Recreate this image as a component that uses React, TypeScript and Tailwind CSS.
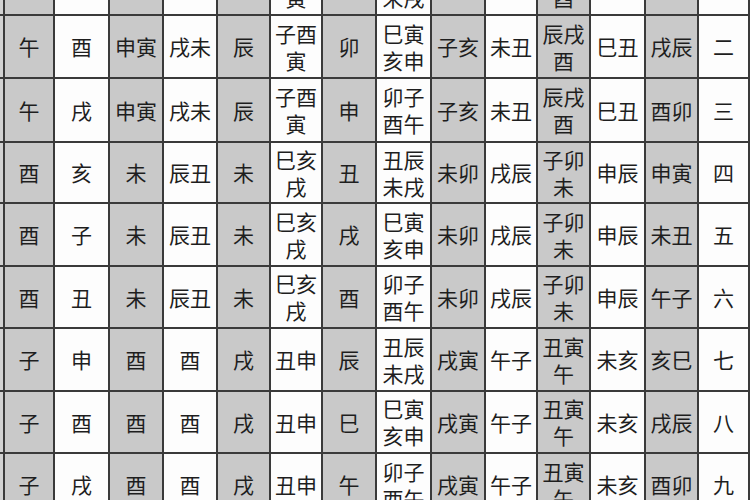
import React from "react";

const rows: string[][] = [
  ["", "", "", "", "", "子酉/寅", "", "丑辰/未戌", "", "", "辰戌/酉", "", "", ""],
  ["午", "酉", "申寅", "戌未", "辰", "子酉/寅", "卯", "巳寅/亥申", "子亥", "未丑", "辰戌/酉", "巳丑", "戌辰", "二"],
  ["午", "戌", "申寅", "戌未", "辰", "子酉/寅", "申", "卯子/酉午", "子亥", "未丑", "辰戌/酉", "巳丑", "酉卯", "三"],
  ["酉", "亥", "未", "辰丑", "未", "巳亥/戌", "丑", "丑辰/未戌", "未卯", "戌辰", "子卯/未", "申辰", "申寅", "四"],
  ["酉", "子", "未", "辰丑", "未", "巳亥/戌", "戌", "巳寅/亥申", "未卯", "戌辰", "子卯/未", "申辰", "未丑", "五"],
  ["酉", "丑", "未", "辰丑", "未", "巳亥/戌", "酉", "卯子/酉午", "未卯", "戌辰", "子卯/未", "申辰", "午子", "六"],
  ["子", "申", "酉", "酉", "戌", "丑申", "辰", "丑辰/未戌", "戌寅", "午子", "丑寅/午", "未亥", "亥巳", "七"],
  ["子", "酉", "酉", "酉", "戌", "丑申", "巳", "巳寅/亥申", "戌寅", "午子", "丑寅/午", "未亥", "戌辰", "八"],
  ["子", "戌", "酉", "酉", "戌", "丑申", "午", "卯子/酉午", "戌寅", "午子", "丑寅/午", "未亥", "酉卯", "九"],
];

function Cell({ text, gray }: { text: string; gray: boolean }) {
  const lines = text ? text.split("/") : [];
  return (
    <div
      className={`flex flex-col items-center justify-center overflow-hidden text-[21px] leading-[27px] text-[#1e1e1e] ${
        gray ? "bg-[#c9c9c9]" : "bg-[#fdfdfd]"
      }`}
    >
      {lines.map((l, i) => (
        <span key={i} className="whitespace-nowrap">
          {l}
        </span>
      ))}
    </div>
  );
}

export default function App() {
  return (
    <div
      className="w-[750px] h-[500px] overflow-hidden bg-[#3a3a3a]"
      style={{ fontFamily: '"Noto Sans CJK SC", "Noto Sans", sans-serif' }}
    >
      <div className="mt-[-47px] grid gap-[2px] pr-[2px] grid-cols-[3px_48px_53px_52px_52px_51px_50px_52px_53px_52px_50px_51px_53px_51px_49px] grid-rows-[61px_61px_62px_59px_61px_60px_61px_60px_61px]">
        {rows.map((r, ri) => (
          <React.Fragment key={ri}>
            <div className="bg-[#d2d2d2]" />
            {r.map((t, ci) => (
              <Cell key={ci} text={t} gray={ci % 2 === 0} />
            ))}
          </React.Fragment>
        ))}
      </div>
    </div>
  );
}
